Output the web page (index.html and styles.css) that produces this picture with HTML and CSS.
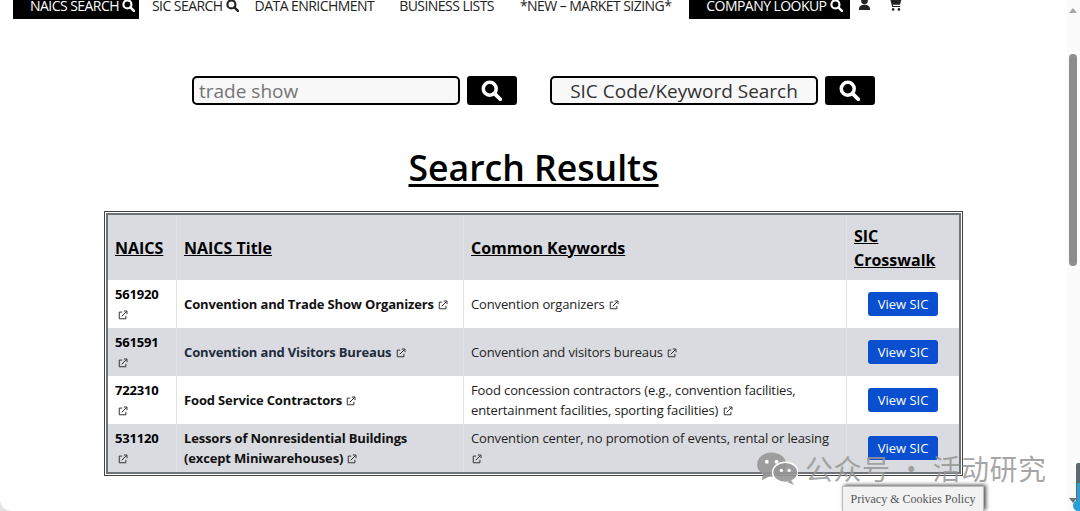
FILE: index.html
```html
<!DOCTYPE html>
<html lang="en">
<head>
    <meta charset="UTF-8">
    <title>Search Results</title>
    <link rel="stylesheet" href="styles.css">
</head>
<body>
    <svg class="sprites" width="0" height="0">
        <symbol id="mag" viewBox="0 0 24 24"><circle cx="10" cy="10" r="7.4" fill="none" stroke="currentColor" stroke-width="4"/><path d="M15.5 15.5 22 22" stroke="currentColor" stroke-width="4.4" stroke-linecap="round"/></symbol>
        <symbol id="ext" viewBox="0 0 12 12"><path d="M5 2.5H1.5v8h8V7" fill="none" stroke="currentColor" stroke-width="1.2"/><path d="M4.5 7.5 10 2M7 1.2h3.8V5" fill="none" stroke="currentColor" stroke-width="1.2"/></symbol>
    </svg>
    <div class="frame">
        <nav class="nav">
            <a class="nav-item nav-dark nav-naics">NAICS SEARCH <svg class="nav-mag"><use href="#mag"/></svg></a>
            <a class="nav-item nav-sic">SIC SEARCH <svg class="nav-mag"><use href="#mag"/></svg></a>
            <a class="nav-item nav-data">DATA ENRICHMENT</a>
            <a class="nav-item nav-lists">BUSINESS LISTS</a>
            <a class="nav-item nav-new">*NEW – MARKET SIZING*</a>
            <a class="nav-item nav-dark nav-company">COMPANY LOOKUP <svg class="nav-mag"><use href="#mag"/></svg></a>
            <svg class="nav-icon" viewBox="0 0 14 14"><circle cx="7" cy="3" r="3.6"/><path d="M1 13c0-4 2-5.6 6-5.6s6 1.6 6 5.6z"/></svg>
            <svg class="nav-icon nav-cart" viewBox="0 0 14 14"><path d="M0 0h2.6l.5 1.6H14l-1.7 5.6H4.6l.4 1.3h7.6v1.2H4L1.8 1.2H0z"/><circle cx="5" cy="12.3" r="1.4"/><circle cx="11.2" cy="12.3" r="1.4"/></svg>
        </nav>

        <div class="search-row">
            <form class="search search-naics">
                <input class="search-input" type="text" placeholder="trade show">
                <button class="search-btn" type="button"><svg><use href="#mag"/></svg></button>
            </form>
            <form class="search search-sic">
                <div class="search-input search-link">SIC Code/Keyword Search</div>
                <button class="search-btn" type="button"><svg><use href="#mag"/></svg></button>
            </form>
        </div>

        <h1 class="title">Search Results</h1>

        <div class="table-wrap">
            <table class="results">
                <thead>
                    <tr>
                        <th class="col-code"><u>NAICS</u></th>
                        <th class="col-title"><u>NAICS Title</u></th>
                        <th class="col-keys"><u>Common Keywords</u></th>
                        <th class="col-sic"><u>SIC Crosswalk</u></th>
                    </tr>
                </thead>
                <tbody>
                    <tr>
                        <td class="code">561920 <svg class="ext"><use href="#ext"/></svg></td>
                        <td class="name">Convention and Trade Show Organizers <svg class="ext"><use href="#ext"/></svg></td>
                        <td>Convention organizers <svg class="ext"><use href="#ext"/></svg></td>
                        <td class="action"><a class="view">View SIC</a></td>
                    </tr>
                    <tr>
                        <td class="code">561591 <svg class="ext"><use href="#ext"/></svg></td>
                        <td class="name name-blue">Convention and Visitors Bureaus <svg class="ext"><use href="#ext"/></svg></td>
                        <td>Convention and visitors bureaus <svg class="ext"><use href="#ext"/></svg></td>
                        <td class="action"><a class="view">View SIC</a></td>
                    </tr>
                    <tr>
                        <td class="code">722310 <svg class="ext"><use href="#ext"/></svg></td>
                        <td class="name">Food Service Contractors <svg class="ext"><use href="#ext"/></svg></td>
                        <td>Food concession contractors (e.g., convention facilities, entertainment facilities, sporting facilities) <svg class="ext"><use href="#ext"/></svg></td>
                        <td class="action"><a class="view">View SIC</a></td>
                    </tr>
                    <tr>
                        <td class="code">531120 <svg class="ext"><use href="#ext"/></svg></td>
                        <td class="name">Lessors of Nonresidential Buildings (except Miniwarehouses) <svg class="ext"><use href="#ext"/></svg></td>
                        <td>Convention center, no promotion of events, rental or leasing <svg class="ext"><use href="#ext"/></svg></td>
                        <td class="action"><a class="view">View SIC</a></td>
                    </tr>
                </tbody>
            </table>
        </div>
    </div>

    <div class="scrollbar">
        <span class="scroll-up"></span>
        <span class="scroll-thumb"></span>
    </div>

    <!-- the cut off widget in the bottom right corner -->
    <div class="gauge">
        <span class="gauge-fill"></span>
        <span class="gauge-tip"></span>
    </div>
    <span class="gauge-arrow"></span>

    <!-- watermark and cookie tab sit over the page -->
    <div class="watermark">
        <svg class="wechat" viewBox="0 0 42 34"><ellipse cx="15" cy="13" rx="15" ry="12.5"/><path d="M6 22l-1 7 8-4z"/><ellipse cx="29" cy="21" rx="13" ry="10.5" stroke="#fff" stroke-width="1.5"/><path d="M35 29l3 5-7-3z"/><circle cx="10" cy="10" r="2" fill="#fff"/><circle cx="20" cy="10" r="2" fill="#fff"/><circle cx="25" cy="19" r="1.7" fill="#fff"/><circle cx="33" cy="19" r="1.7" fill="#fff"/></svg>
        <span class="watermark-text">公众号 · 活动研究</span>
    </div>
    <div class="cookie-tab">Privacy &amp; Cookies Policy</div>
</body>
</html>
```

FILE: styles.css
```css
html, body {
    margin: 0;
    padding: 0;
    height: 511px;
    overflow: hidden;
}
body {
    position: relative;
    width: 1080px;
    background: #e4e4e4;
    color: #000;
    font-family: "Open Sans", sans-serif;
}
.sprites {
    position: absolute;
}
.frame {
    width: 1067px;
    height: 511px;
    background: #fff;
    border-radius: 0 0 0 12px;
    overflow: hidden;
}

/* top nav, cut off by the top of the picture */
.nav {
    display: flex;
    align-items: flex-start;
    height: 19px;
    padding-left: 13px;
}
.nav-item {
    display: flex;
    align-items: center;
    gap: 3px;
    height: 28px;
    margin-top: -9px;
    font-size: 14px;
    line-height: 19px;
    letter-spacing: -0.55px;
    color: #222;
    white-space: nowrap;
}
.nav-dark {
    background: #000;
    color: #fff;
    font-weight: 500;
}
.nav-mag {
    width: 13px;
    height: 13px;
}
.nav-naics { padding: 0 4px 0 17px; }
.nav-sic { margin-left: 13px; }
.nav-data { margin-left: 16px; }
.nav-lists { margin-left: 25px; }
.nav-new { margin-left: 26px; }
.nav-company { margin-left: 18px; padding: 0 7px 0 17px; }
.nav-icon {
    width: 13px;
    height: 13px;
    margin: -2px 0 0 8px;
    fill: #222;
}
.nav-cart {
    width: 14px;
    margin-left: 17px;
}

/* search boxes */
.search-row {
    display: flex;
    margin-top: 57px;
    padding-left: 192px;
}
.search {
    display: flex;
    gap: 7px;
}
.search-sic {
    margin-left: 33px;
}
.search-input {
    box-sizing: border-box;
    width: 268px;
    height: 29px;
    padding: 0 5px;
    border: 2px solid #000;
    border-radius: 5px;
    background: #f8f8f8;
    font-family: "Open Sans", sans-serif;
    font-size: 19px;
    color: #333;
    outline: none;
}
.search-input::placeholder {
    color: #757575;
}
.search-link {
    line-height: 26px;
    text-align: center;
}
.search-btn {
    display: flex;
    align-items: center;
    justify-content: center;
    width: 50px;
    height: 29px;
    padding: 0;
    border: 0;
    border-radius: 3px;
    background: #000;
    color: #fff;
}
.search-btn svg {
    width: 21px;
    height: 21px;
    margin-right: 2px;
}

.title {
    margin: 37px 0 0;
    font-size: 35.6px;
    line-height: 50px;
    font-weight: 600;
    text-align: center;
    text-decoration: underline;
    text-decoration-thickness: 3px;
    text-underline-offset: 3px;
}

/* results table */
.table-wrap {
    box-sizing: border-box;
    width: 859px;
    margin: 19px 0 0 104px;
    border: 1px solid #444;
    padding: 1px;
}
.results {
    width: 100%;
    border-collapse: separate;
    border-spacing: 0;
    table-layout: fixed;
    border: 2px solid #6f7478;
    font-size: 13px;
    line-height: 20px;
    color: #222;
}
.results th, .results td {
    padding: 4px 7px;
    border-left: 1px solid #e2e3e7;
    text-align: left;
}
.results th:first-child, .results td:first-child {
    border-left: 0;
}
.results th {
    height: 65px;
    box-sizing: border-box;
    background: #dadbe0;
    font-size: 16px;
    line-height: 24px;
    font-weight: 700;
    color: #000;
}
.col-code { width: 68px; }
.col-title { width: 287px; }
.col-keys { width: 383px; }
.results tbody tr {
    height: 48px;
    background: #fff;
}
.results tbody tr:nth-child(even) {
    background: #dadbe0;
}
.results td {
    letter-spacing: -0.13px;
}
.results td.code {
    font-weight: 700;
    letter-spacing: -0.2px;
    color: #000;
}
.results td.name {
    font-weight: 700;
    letter-spacing: -0.15px;
    color: #111;
}
.results td.name-blue {
    color: #1d2c3c;
}
.ext {
    width: 10px;
    height: 10px;
    margin-left: 1px;
    vertical-align: -1px;
    color: #333;
}
.code .ext {
    margin-left: 3px;
}
.results td.action {
    padding: 0 0 0 21px;
}
.view {
    display: block;
    width: 70px;
    height: 24px;
    border-radius: 3px;
    background: #0a4fd0;
    color: #fff;
    line-height: 24px;
    letter-spacing: 0;
    text-align: center;
}

/* fake window scrollbar on the right */
.scrollbar {
    position: absolute;
    right: 0;
    top: 0;
    width: 13px;
    height: 511px;
    background: #fbfbfb;
}
.scroll-up {
    position: absolute;
    left: 2px;
    top: 8px;
    border: 4px solid transparent;
    border-top: 0;
    border-bottom: 5px solid #a6a6a6;
}
.scroll-thumb {
    position: absolute;
    left: 2px;
    top: 54px;
    width: 8px;
    height: 212px;
    border-radius: 4px;
    background: #8d8d8d;
}
.gauge {
    position: absolute;
    left: 1076px;
    top: 463px;
    width: 4px;
    height: 48px;
    border-radius: 2px 0 0 0;
    background: #5d6870;
}
.gauge-fill {
    position: absolute;
    left: 1px;
    top: 20px;
    width: 3px;
    height: 28px;
    background: #2a9fd6;
}
.gauge-tip {
    position: absolute;
    left: -3px;
    top: 37px;
    width: 11px;
    height: 11px;
    border-radius: 50%;
    background: #2a9fd6;
}
.gauge-arrow {
    position: absolute;
    left: 1069px;
    top: 498px;
    border: 4px solid transparent;
    border-bottom: 0;
    border-top: 5px solid #6b7278;
}

.watermark {
    position: absolute;
    left: 757px;
    top: 451px;
    display: flex;
    align-items: center;
    gap: 7px;
    color: rgba(150, 150, 150, 0.85);
}
.wechat {
    width: 41px;
    height: 33px;
    fill: rgba(150, 150, 150, 0.9);
}
.watermark-text {
    font-family: "Noto Sans CJK SC", sans-serif;
    font-size: 28px;
    line-height: 34px;
    letter-spacing: 0.5px;
    white-space: nowrap;
}
.cookie-tab {
    position: absolute;
    left: 842px;
    top: 486px;
    box-sizing: border-box;
    width: 142px;
    height: 25px;
    border: 1px solid #bbb;
    border-bottom: 0;
    background: #f2f2f2;
    box-shadow: 2px -1px 4px rgba(0, 0, 0, 0.7);
    font-family: "Liberation Serif", serif;
    font-size: 12px;
    line-height: 24px;
    text-align: center;
    color: #555;
    white-space: nowrap;
}
```
